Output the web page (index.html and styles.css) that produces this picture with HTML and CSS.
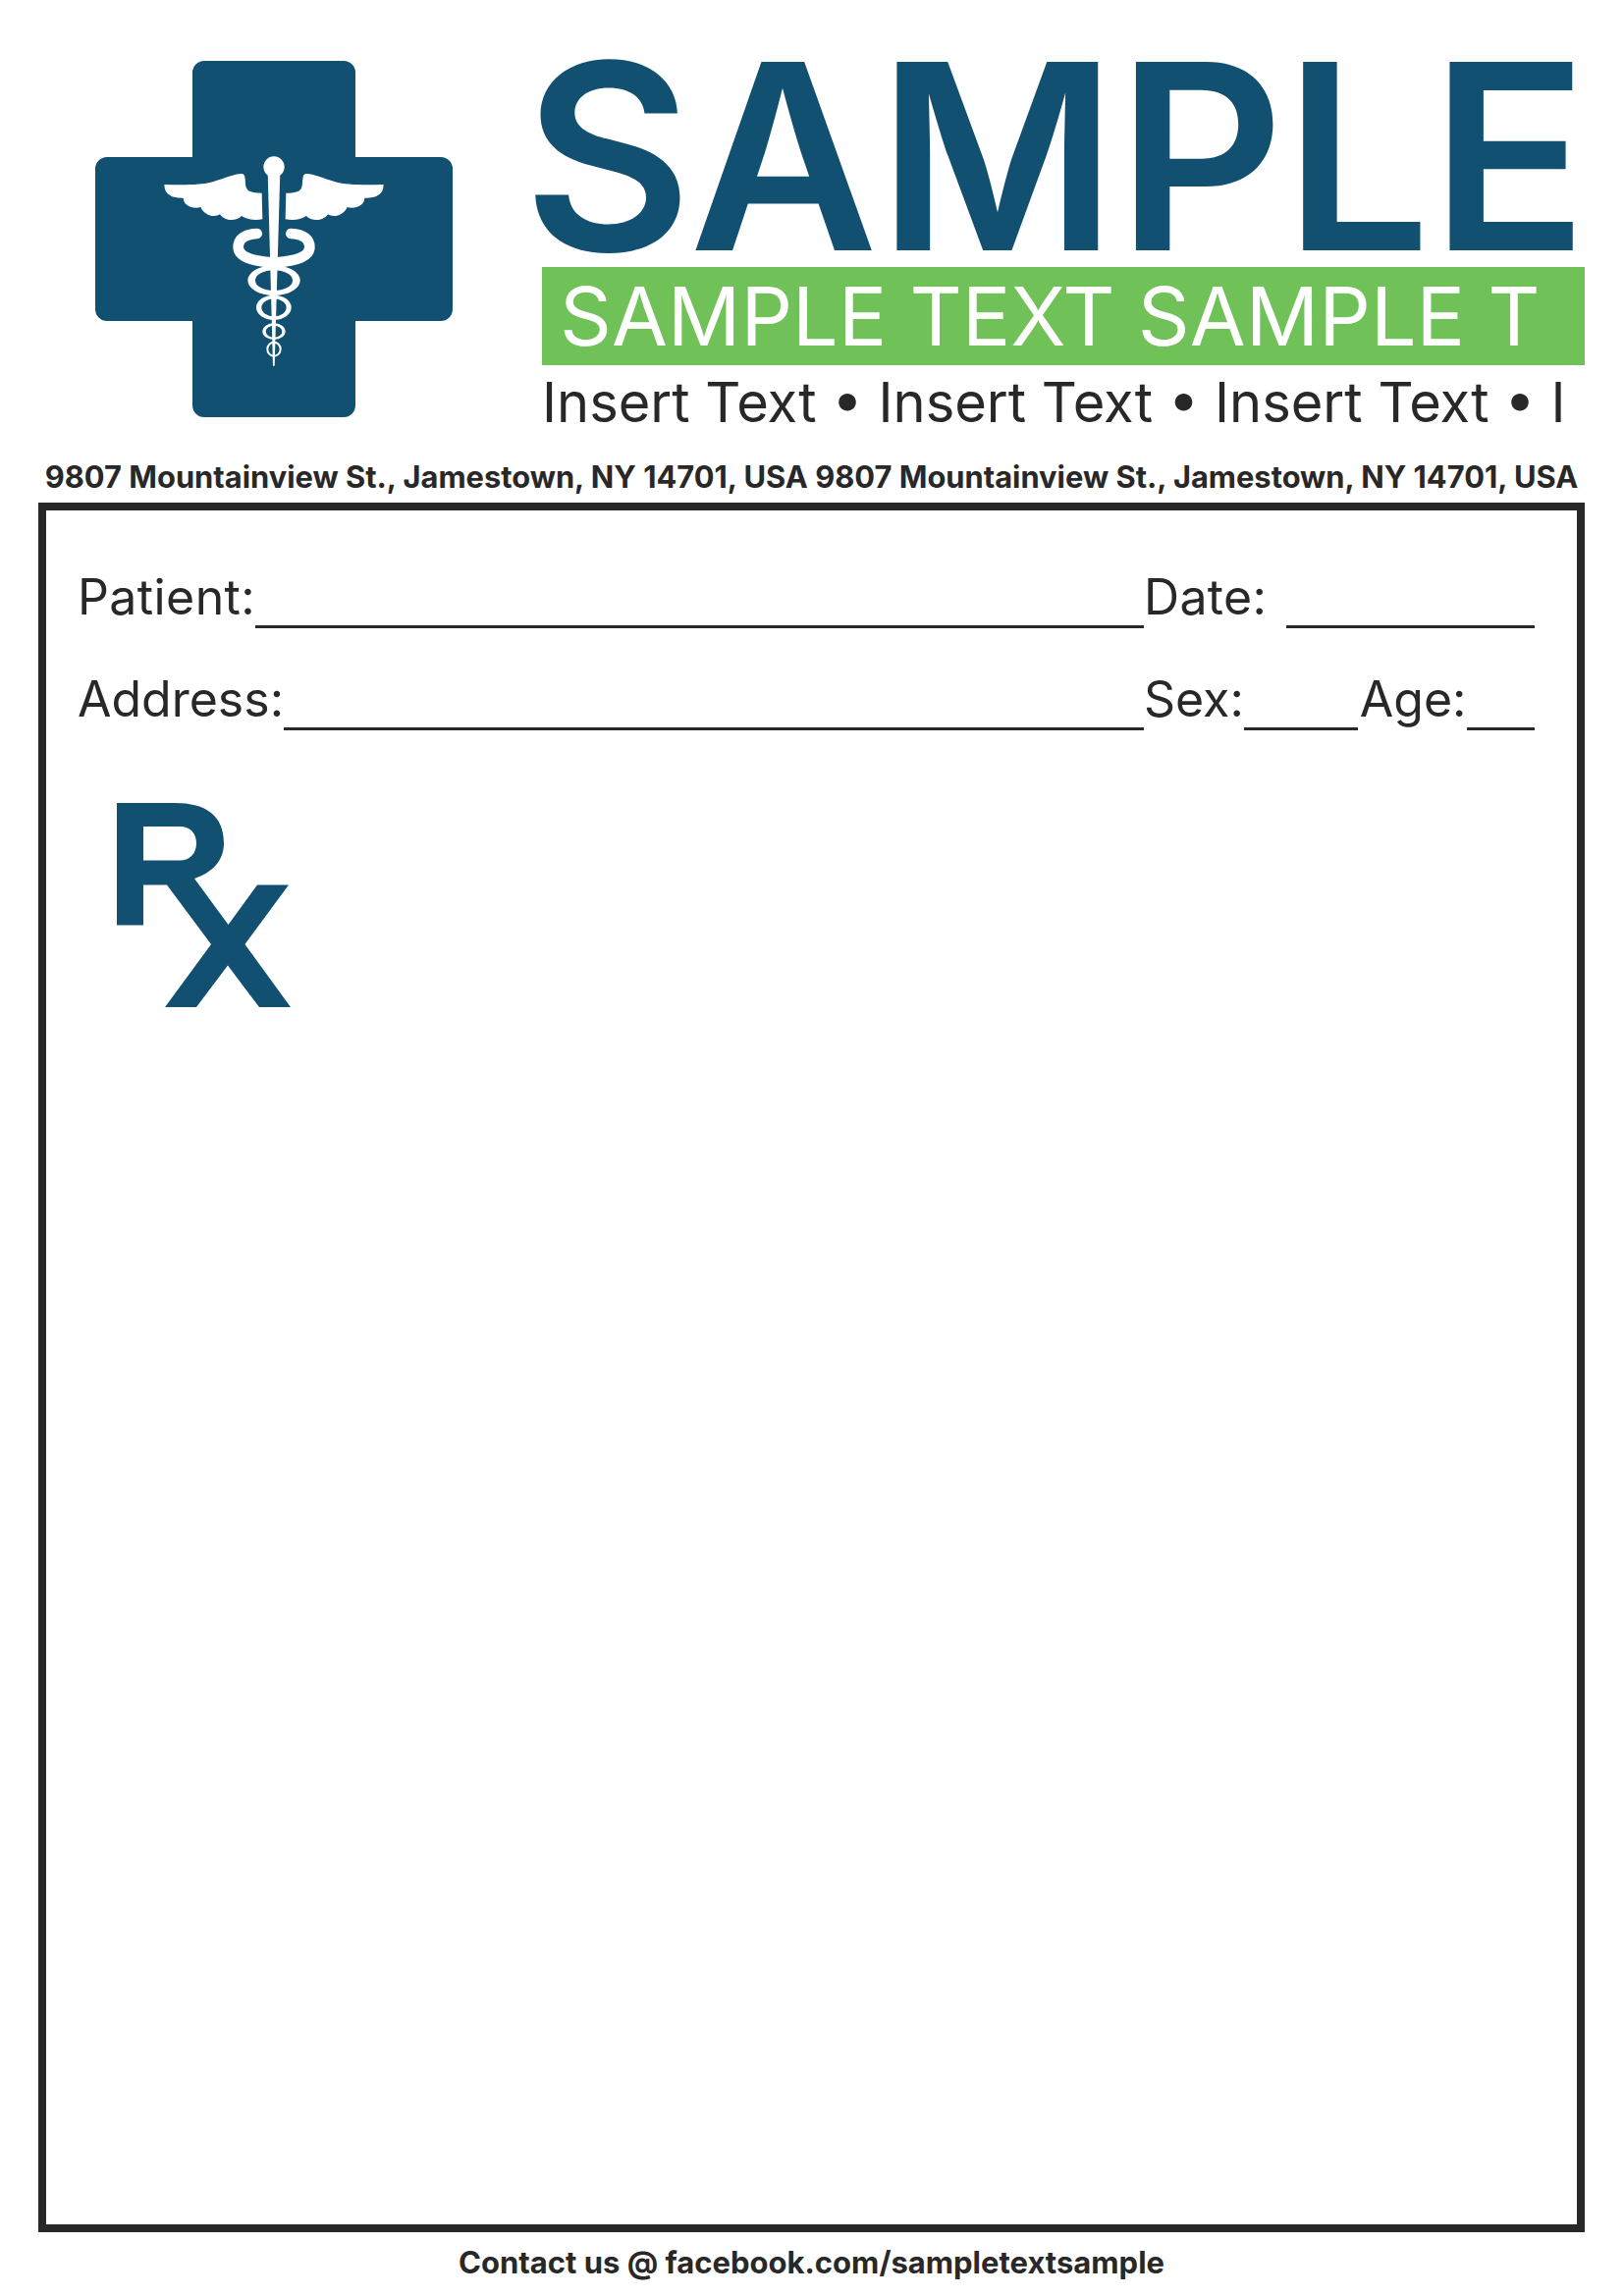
FILE: index.html
```html
<!DOCTYPE html>
<html lang="en">
<head>
<meta charset="utf-8">
<title>Prescription pad</title>
<link rel="stylesheet" href="styles.css">
</head>
<body>
<div class="page">
  <header class="header">
    <svg class="logo" viewBox="97 62 364 363" width="364" height="363" aria-hidden="true">
      <path class="navy" d="M208 62H350a12 12 0 0 1 12 12V160H449a12 12 0 0 1 12 12V315a12 12 0 0 1-12 12H362V413a12 12 0 0 1-12 12H208a12 12 0 0 1-12-12V327H109a12 12 0 0 1-12-12V172a12 12 0 0 1 12-12H196V74a12 12 0 0 1 12-12Z"/>
      <g transform="translate(150 140) scale(.33333)">
        <circle class="white" cx="387" cy="90" r="32"/>
        <path class="white" d="M368 105H406L389 698H384Z"/>
        <path class="white" d="M52 144C110 146 165 146 200 136C240 124 275 108 292 112C302 116 298 140 302 152C306 166 325 170 350 170L352 250C325 255 305 250 288 240C275 254 240 260 222 235C205 246 175 240 163 213C140 220 110 208 110 185C80 186 52 178 52 144Z"/>
        <path class="white" d="M722 144C664 146 609 146 574 136C534 124 499 108 482 112C472 116 476 140 472 152C468 166 449 170 424 170L422 250C449 255 469 250 486 240C499 254 534 260 552 235C569 246 599 240 611 213C634 220 664 208 664 185C694 186 722 178 722 144Z"/>
        <path class="snake" d="M335 294C295 296 278 312 278 335C278 365 320 378 378 382"/>
        <path class="snake" d="M439 294C479 296 496 312 496 335C496 365 454 378 396 382"/>
        <path class="white" fill-rule="evenodd" d="M307 437a80 46 0 1 0 160 0a80 46 0 1 0-160 0ZM330 437a57 31 0 1 1 114 0a57 31 0 1 1-114 0Z"/>
        <path class="white" fill-rule="evenodd" d="M333 520a53.500 38 0 1 0 107 0a53.500 38 0 1 0-107 0ZM349 520a38 27 0 1 1 76 0a38 27 0 1 1-76 0Z"/>
        <path class="white" fill-rule="evenodd" d="M352 593a35 25 0 1 0 70 0a35 25 0 1 0-70 0ZM362 593a25 18 0 1 1 50 0a25 18 0 1 1-50 0Z"/>
        <path class="white" fill-rule="evenodd" d="M364 647a23 24 0 1 0 46 0a23 24 0 1 0-46 0ZM370 647a17 18 0 1 1 34 0a17 18 0 1 1-34 0Z"/>
      </g>
    </svg>
    <div class="brand">
      <h1 class="title">SAMPLE</h1>
      <div class="banner">SAMPLE TEXT SAMPLE T</div>
      <p class="tagline">Insert Text • Insert Text • Insert Text • I</p>
    </div>
  </header>
  <p class="address">9807 Mountainview St., Jamestown, NY 14701, USA 9807 Mountainview St., Jamestown, NY 14701, USA</p>
  <main class="sheet">
    <div class="form-row">
      <div class="field"><span class="label-patient">Patient:</span><span class="rule"></span></div>
      <div class="field"><span class="label-date">Date:</span><span class="rule"></span></div>
    </div>
    <div class="form-row">
      <div class="field"><span>Address:</span><span class="rule"></span></div>
      <div class="field"><span>Sex:</span><span class="rule rule-sex"></span><span>Age:</span><span class="rule"></span></div>
    </div>
    <svg class="rx" viewBox="119 818 178 210" width="178" height="210" aria-hidden="true">
      <path class="navy" d="M119 819H178C210 819 228 832 228 860C228 878 216 890 198 896L232.500 943L262 902.500H294L249.400 963L296 1027H264L232 984.500L200 1027H168L215 963L170 902.500H146V943.600H119ZM146 843V877.500H183C194 877.500 200 870 200 860C200 850 194 843 183 843Z"/>
    </svg>
  </main>
  <footer class="footer">Contact us @ facebook.com/sampletextsample</footer>
</div>
</body>
</html>
```
FILE: styles.css
```css
* { box-sizing: border-box; }
html, body { margin: 0; background: #fff; }
body { font-family: Inter, "Liberation Sans", sans-serif; color: #282828; }
.page { width: 1654px; height: 2339px; padding: 0 40px 0 39px; overflow: hidden; }
.navy { fill: #125072; }
.white { fill: #fff; }
.snake { fill: none; stroke: #fff; stroke-width: 32; stroke-linecap: round; }

.header { display: flex; height: 460px; }
.logo { display: block; flex: none; margin: 62px 91px 0 58px; }
.brand { flex: 1; min-width: 0; }
.title { margin: 59px 0 0 -19px; font-size: 264px; line-height: 200px; font-weight: 600; color: #125072; white-space: nowrap; }
.banner { height: 100px; margin-top: 13px; padding-left: 18px; background: #71c159; color: #fff; font-size: 82.5px; line-height: 100px; white-space: nowrap; }
.tagline { margin: 3px 0 0; font-size: 56px; line-height: 70px; white-space: nowrap; }

.address { margin: 0; height: 52px; font-size: 30.85px; line-height: 52px; font-weight: 700; text-align: center; white-space: nowrap; }

.sheet { height: 1762px; border: 8px solid #282828; padding: 56px 43px 0 32px; }
.form-row { display: grid; grid-template-columns: 1fr 398px; height: 104px; font-size: 50px; line-height: 64px; }
.field { display: flex; height: 64px; }
.rule { flex: 1; height: 64px; border-bottom: 3px solid #282828; }
.rule-sex { flex: none; width: 116px; margin-right: 2px; }
.label-date { margin-right: 20px; letter-spacing: .3px; }
.label-patient { letter-spacing: .4px; }
.rx { display: block; margin: 33px 0 0 40px; }

.footer { height: 65px; font-size: 31px; line-height: 62px; font-weight: 700; text-align: center; }
```
